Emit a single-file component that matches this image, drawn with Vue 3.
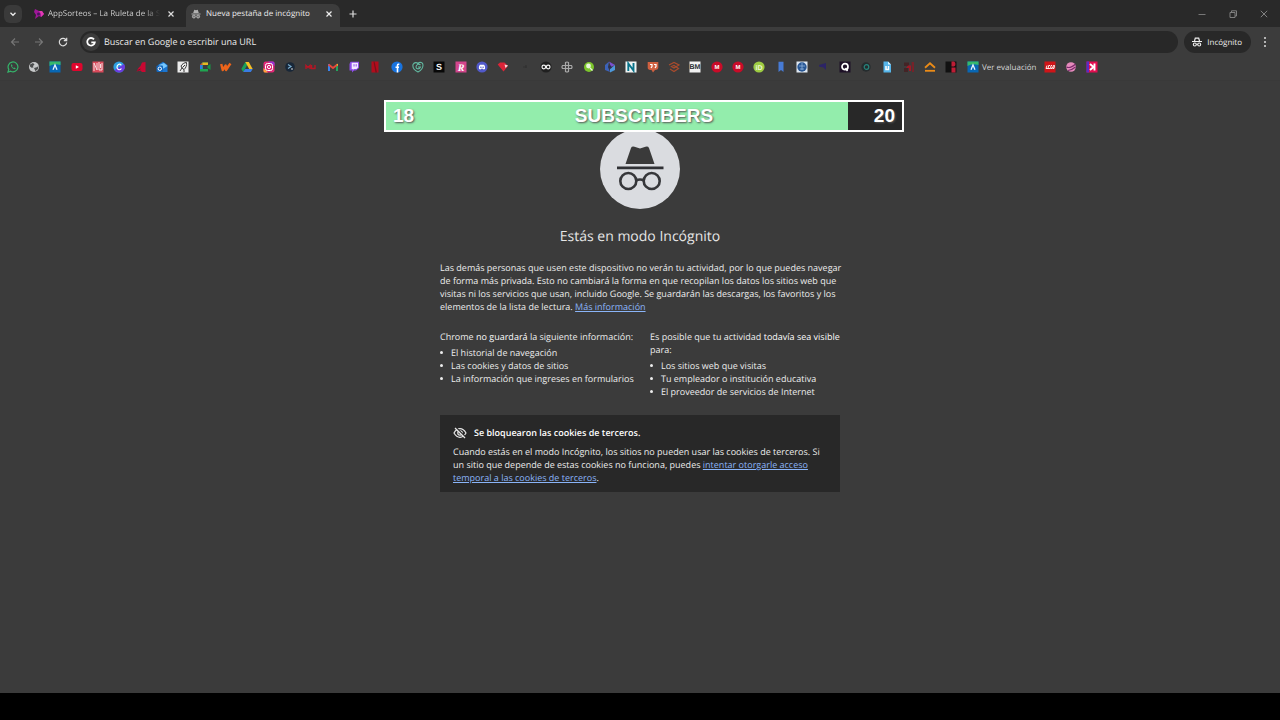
<script setup>
const letter = (t, fill, size = 9, y = 9) =>
  `<text x="6" y="${y}" text-anchor="middle" font-family="Liberation Sans, Arial, sans-serif" font-weight="bold" font-size="${size}" fill="${fill}">${t}</text>`
const square = (fill) => `<rect x="0.5" y="0.5" width="11" height="11" fill="${fill}"/>`
const disc = (fill) => `<circle cx="6" cy="6" r="5.6" fill="${fill}"/>`
const platzi =
  '<rect x="0.5" y="0.5" width="11" height="11" fill="#0867b4"/><path d="M.5 .5H11.500V4Q5 2 .5 5Z" fill="#35b86b"/><path d="M4 8.700 6 4 8 8.700" fill="none" stroke="#e6f4ff" stroke-width="1.300"/>'

const bookmarks = [
  { name: 'WhatsApp', art: '<path d="M1 11 1.800 8.400A4.900 4.900 0 1 1 3.700 10.200Z" fill="none" stroke="#35b36a" stroke-width="1.200"/><path d="M4 3.600C3.600 5.800 6 8.400 8.200 8.200L8.700 7.200 7.300 6.400 6.700 7C5.900 6.700 5.300 6.100 5 5.300L5.500 4.700 4.900 3.400Z" fill="#35b36a"/>' },
  { name: 'Web', art: '<circle cx="6" cy="6" r="5" fill="#c6c8c9"/><path d="M2 3.500 5 2 6.500 3.500 5 5 5.500 6.500 3.500 6.800 2 5.500ZM6 7 9.500 6 10.500 4 10 8 7.500 10.200Z" fill="#4b4d4e"/>' },
  { name: 'Evaluación', art: platzi },
  { name: 'YouTube', art: '<rect x=".5" y="2" width="11" height="8" rx="2" fill="#e0052d"/><path d="M4.800 4.200 8 6 4.800 7.800Z" fill="#fff"/>' },
  { name: 'NJ', art: square('#d94a5b') + '<path d="M2 10V2L5 9V2M7 1V9M7 9H10V2M8.500 3V7" fill="none" stroke="#f3d9dc" stroke-width="1"/>' },
  { name: 'Canva', art: disc('#2c9fe0') + '<path d="M6 11.600A5.600 5.600 0 0 0 11 3Q6 6 1.500 9.300 3 11.600 6 11.600Z" fill="#6a3be0"/><path d="M8.300 4.300C6.500 1.800 3.800 4 4 6.500S7 9.500 8.400 7.500" fill="none" stroke="#fff" stroke-width="1.200"/>' },
  { name: 'Adobe', art: '<path d="M10.500 1V11H7L5.500 9.500 1.500 10.500 3.500 7 5.500 5 7 1.500Z" fill="#c90832"/><path d="M2.500 9.500 5.500 8" stroke="#76102a"/>' },
  { name: 'Outlook', art: '<path d="M2 4 7 .8 11.500 4V11H2Z" fill="#1b75d0"/><path d="M3 4 8 2 11.500 5 5 9Z" fill="#76c8ff"/><rect x=".5" y="4.500" width="6.500" height="6.500" rx="1" fill="#1266bd"/><circle cx="3.800" cy="7.700" r="1.700" fill="none" stroke="#fff"/>' },
  { name: 'Pluma', art: square('#ececec') + '<path d="M3 10 5 7 4 5C5 3 7.500 1.500 9.500 1.500 10 4 9 7 7 8.500L5 7M5.500 6.500 8 4M7 8.500V11" fill="none" stroke="#262626" stroke-width=".9"/>' },
  { name: 'Meet', art: '<path d="M1 4 3.500 1.500H9V4H4V8H9V10.500H1Z" fill="#20a451"/><path d="M1 4 3.500 1.500V4Z" fill="#e34435"/><path d="M1 4H3.500V8H1Z" fill="#3179e3"/><path d="M3.500 1.500H9V4H3.500Z" fill="#e8b823"/><path d="M8.500 5 11.500 3V9L8.500 7Z" fill="#169545"/>' },
  { name: 'Wattpad', art: '<path d="M1.200 3 2.700 9 5.700 4.500 6 9 9 4.500 10.500 2.500" fill="none" stroke="#ed641a" stroke-width="2.400" stroke-linejoin="round"/>' },
  { name: 'Drive', art: '<path d="M4.300 1H7.800L4 8 2.200 11 .3 7.900Z" fill="#1aa05a"/><path d="M4.300 1H7.800L11.700 7.900H8.200Z" fill="#f5bf25"/><path d="M4.100 7.900H11.700L9.800 11H2.200Z" fill="#397ce3"/>' },
  { name: 'Instagram', art: '<rect x=".5" y=".5" width="11" height="11" rx="2" fill="#df2876"/><path d="M.5 7 5 11.500H2Q.5 11.500 .5 10Z" fill="#ffa53a"/><path d="M5 .5H10Q11.500 .5 11.500 2V5Z" fill="#9b32cf"/><rect x="2.500" y="2.500" width="7" height="7" rx="2" fill="none" stroke="#fff"/><circle cx="6" cy="6" r="1.600" fill="none" stroke="#fff"/>' },
  { name: 'Consola', art: '<circle cx="6" cy="6" r="4.800" fill="#182738"/><path d="M4 3.500 7 5.500 4 7.500" fill="none" stroke="#79aed0" stroke-width="1.200"/><path d="M7 8H9" stroke="#ddd"/>' },
  { name: 'MU', art: '<path d="M1 8V4.500L3 6.500 5 4.500V8M6.500 4V7.500H10V4" fill="none" stroke="#b51625" stroke-width="1.400"/>' },
  { name: 'Gmail', art: '<path d="M1 10V3H3V10Z" fill="#3a83ed"/><path d="M9 10V3H11V10Z" fill="#22a55c"/><path d="M1.500 3.500 6 7 10.500 3.500" fill="none" stroke="#e5483b" stroke-width="2"/><path d="M9.500 4 11 2.500V5Z" fill="#f1bb2b"/>' },
  { name: 'Twitch', art: '<path d="M2.500 .7H11V7L8 9.500H6L4 11.500V9.500H1.500V3Z" fill="#8e4de9"/><path d="M3.700 1.700H10V6.500L8.500 8H6L4.800 9V8H3.700Z" fill="#f2eaff"/><path d="M6 3.200V5.500M8.200 3.200V5.500" stroke="#8e4de9"/>' },
  { name: 'Netflix', art: '<path d="M2.500 .5H9.500V11.500H2.500Z" fill="#b10c1c"/><path d="M4.500 .5H5.500L8 11.500H6.500Z" fill="#73121c"/>' },
  { name: 'Facebook', art: disc('#1873df') + '<path d="M8.300 3.300H7.200Q6.500 3.300 6.500 4.200V11.500M4.500 6.300H8" fill="none" stroke="#fff" stroke-width="1.600"/>' },
  { name: 'Gradle', art: '<path d="M6 11C2 9 .5 6 1 3.500 2.500 .8 5 1.500 6 2.500 8 .5 11 1.500 11 4 11 7 9 9.500 6 11ZM8.500 4C7 2.500 4 3.500 4 6S7.500 8.500 8.500 6H6" fill="none" stroke="#62b9a1" stroke-width="1.100"/>' },
  { name: 'S', art: square('#080808') + letter('S', '#f5f5f5', 9, 9) },
  { name: 'R', art: square('#d2458b') + '<text x="6" y="9.500" text-anchor="middle" font-family="Liberation Serif, serif" font-style="italic" font-weight="bold" font-size="10" fill="#fff">R</text>' },
  { name: 'Discord', art: disc('#5159c9') + '<path d="M3 8C2.700 6 3.200 4.500 4 3.800H8C8.800 4.500 9.300 6 9 8L7.500 8.500 7 7.800H5L4.500 8.500Z" fill="#fff"/><circle cx="4.900" cy="6.200" r=".7" fill="#5159c9"/><circle cx="7.100" cy="6.200" r=".7" fill="#5159c9"/>' },
  { name: 'Rubí', art: '<path d="M.7 3.500 3 1.500H7.500L11 5 6.500 10.500Z" fill="#dc2438"/><path d="M7.500 3.500 11 4.500 8.500 7Z" fill="#f1dede"/>' },
  { name: 'Nota', art: '<path d="M4 6H8M7 4V7" stroke="#313131" stroke-width="1.200"/>' },
  { name: 'Codo', art: disc('#202020') + '<circle cx="3.800" cy="6" r="1.800" fill="none" stroke="#f5f5f5" stroke-width="1.200"/><circle cx="8.200" cy="6" r="1.800" fill="none" stroke="#f5f5f5" stroke-width="1.200"/>' },
  { name: 'Malla', art: '<path d="M4.500 3V1.500Q6 .5 7.500 1.500V4.500H10.500Q11.500 6 10.500 7.500H7.500V10.500Q6 11.500 4.500 10.500V7.500H1.500Q.5 6 1.500 4.500H4.500ZM4.500 4.500H7.500V7.500H4.500Z" fill="none" stroke="#a8a8a8" stroke-width="1.200"/>' },
  { name: 'Lima', art: '<circle cx="6" cy="6" r="5" fill="#7cc52c"/><circle cx="5.500" cy="5" r="2.400" fill="#e8f5db"/><path d="M7 7 9.500 9.500" fill="none" stroke="#e8f5db" stroke-width="1.200"/>' },
  { name: 'Hélice', art: '<path d="M5 .5 11 4 7 6Z" fill="#7a51cf"/><path d="M11 4V9L6 11.500 6 8Z" fill="#4d99dc"/><path d="M5 .5 1 4V9L6 11 4 6Z" fill="#3c62b8"/><circle cx="6" cy="6" r="1.600" fill="#252f58"/>' },
  { name: 'N', art: square('#f0f4f4') + '<path d="M3.300 10V2.500L8.500 9.500V2" fill="none" stroke="#08738a" stroke-width="1.900"/>' },
  { name: 'Citas', art: '<path d="M.7 1H11.300V7Q11 9 8 9L6 11.500 4.500 9Q1 9 .7 7Z" fill="#cf6040"/><path d="M3 3.500H5V5.500L4 7M7 3.500H9V5.500L8 7" fill="none" stroke="#fff" stroke-width="1.200"/>' },
  { name: 'Capas', art: '<path d="M1 4 6 1.500 11 4 6 7 3.500 5.500 6 4.500 10.500 7.500 6 10.500 2 8" fill="none" stroke="#a94b2d" stroke-width="1.200"/>' },
  { name: 'BM', art: square('#f2f2f2') + letter('BM', '#252b30', 7, 8) },
  { name: 'Mega', art: disc('#c90b28') + letter('M', '#fff', 6, 8) },
  { name: 'Mega 2', art: disc('#c90b28') + letter('M', '#fff', 6, 8) },
  { name: 'iD', art: disc('#9dcc42') + letter('iD', '#eff8d8', 7, 9) },
  { name: 'Marcador', art: '<path d="M3.500 .7H8.500V11L6 9 3.500 11Z" fill="#477bd5"/>' },
  { name: 'Escudo', art: square('#dfe8f2') + '<circle cx="6" cy="6" r="4.700" fill="#285795"/><path d="M3 5H9M6 2V9M4 8H8" stroke="#91b4dd" stroke-width=".8"/>' },
  { name: 'Bandera', art: '<path d="M2 4 9 2V9L6.500 6.500 2 5.500Z" fill="#2c2466"/>' },
  { name: 'Q', art: square('#1d1026') + '<circle cx="6" cy="5.700" r="3" fill="none" stroke="#fff" stroke-width="1.700"/><path d="M6.500 7 8.500 10" stroke="#fff" stroke-width="1.500"/>' },
  { name: 'Órbita', art: '<circle cx="6" cy="6" r="4.700" fill="#252c2e"/><circle cx="6.500" cy="6" r="2.300" fill="none" stroke="#26867d" stroke-width="1.200"/>' },
  { name: 'Udocz', art: '<path d="M2.500 .5H7L10 3.500V11.500H2.500Z" fill="#55b5ea"/><path d="M7 .5 10 3.500H7Z" fill="#d9f4ff"/><path d="M5 5V8.500H7.500V5" fill="none" stroke="#fff" stroke-width="1.500"/>' },
  { name: 'Ladrillo', art: '<path d="M1 1.500H6V5H1ZM1 7H5V11H1Z" fill="#432426"/><path d="M5 4.500H8V10H6V7H3Z" fill="#9f1826"/><path d="M8.500 1H11V11H9Z" fill="#74232a"/>' },
  { name: 'Techo', art: '<path d="M1 6.700 6 2.300 11 6.700" fill="none" stroke="#eb8b17" stroke-width="1.800"/><path d="M1 9.800H11" stroke="#eb8b17" stroke-width="1.800"/>' },
  { name: 'Bloques', art: square('#111') + '<path d="M6.500 .5H9Q10.500 1 10.500 3T9 5.500H6.500ZM6.500 6.500H10.500V11.500H6.500Z" fill="#bd1d35"/>' },
]

const moreBookmarks = [
  { name: 'Lego', art: square('#cf1418') + '<path d="M2 7.500 3 4.500M2 7.500H4M6 4.500H4.700L4 7.500H6M8 4.500H7L6.500 7.500H8L8.300 6M9.300 4.500H10.500L10 7.500H8.800Z" fill="none" stroke="#fff" stroke-width=".9"/>' },
  { name: 'Esfera', art: '<circle cx="6" cy="6" r="4.800" fill="#e58abc"/><path d="M1.500 6Q5 8 10.500 3M3 9.500Q7 9 10.500 6" fill="none" stroke="#7b2a6c" stroke-width="1.100"/>' },
  { name: 'Kick', art: square('#e30d50') + '<path d="M.5 .5H3V11.500H.5Z" fill="#572cc6"/><path d="M8.500 2.500V9.500M4 3 7.500 6 4 9" fill="none" stroke="#fff" stroke-width="1.900"/>' },
]

const goal = { current: 18, target: 20, label: 'SUBSCRIBERS' }
</script>

<template>
  <div class="screen">
    <header>
      <div class="tabs">
        <button class="tab-search" aria-label="Buscar pestañas">
          <svg viewBox="0 0 12 12"><path d="M3.500 4.800 6 7.300 8.500 4.800" fill="none" stroke="#eee" stroke-width="1.300" /></svg>
        </button>
        <div class="tab">
          <svg class="favicon" viewBox="0 0 12 12"><path d="M2 1 6 3 9 3 11 6 8 9 6 8 2 11 3 7 1 4Z" fill="#a01799" /><path d="M6 3 9 3 11 6 8 9 8 6Z" fill="#e13bb3" /><circle cx="5.500" cy="6" r="1.500" fill="#4b1460" /></svg>
          <span class="tab-title faded">AppSorteos – La Ruleta de la Su</span>
          <button class="icon-button" aria-label="Cerrar AppSorteos"><svg viewBox="0 0 12 12"><path d="M3.500 3.500 8.500 8.500M8.500 3.500 3.500 8.500" stroke="#ddd" stroke-width="1.200" /></svg></button>
        </div>
        <div class="tab active">
          <svg class="favicon" viewBox="0 0 12 12"><path d="M3.200 5 4.300 1.700 6 2.200 7.700 1.700 8.800 5Z" fill="#b1b1b1" /><path d="M1.500 6H10.500" stroke="#b1b1b1" /><circle cx="3.900" cy="8.500" r="1.500" fill="#777" stroke="#b1b1b1" /><circle cx="8.100" cy="8.500" r="1.500" fill="#777" stroke="#b1b1b1" /></svg>
          <span class="tab-title">Nueva pestaña de incógnito</span>
          <button class="icon-button" aria-label="Cerrar pestaña"><svg viewBox="0 0 12 12"><path d="M3.500 3.500 8.500 8.500M8.500 3.500 3.500 8.500" stroke="#eee" stroke-width="1.200" /></svg></button>
        </div>
        <button class="icon-button new-tab" aria-label="Nueva pestaña"><svg viewBox="0 0 12 12"><path d="M6 2.500V9.500M2.500 6H9.500" stroke="#ddd" stroke-width="1.200" /></svg></button>
        <div class="window-controls">
          <button class="icon-button" aria-label="Minimizar"><svg viewBox="0 0 12 12"><path d="M2.500 6.500H9.500" stroke="#777" /></svg></button>
          <button class="icon-button" aria-label="Restaurar"><svg viewBox="0 0 12 12"><path d="M3 4.500H8V9.500H3ZM4.500 4.500V2.800H9.500V8H8" fill="none" stroke="#888" stroke-width=".9" /></svg></button>
          <button class="icon-button" aria-label="Cerrar"><svg viewBox="0 0 12 12"><path d="M2.800 2.800 9.200 9.200M9.200 2.800 2.800 9.200" stroke="#8b8b8b" stroke-width=".9" /></svg></button>
        </div>
      </div>

      <div class="toolbar">
        <button class="icon-button" aria-label="Atrás"><svg viewBox="0 0 12 12"><path d="M10 6H2.500M6 2.500 2.500 6 6 9.500" fill="none" stroke="#777" stroke-width="1.100" /></svg></button>
        <button class="icon-button" aria-label="Adelante"><svg viewBox="0 0 12 12"><path d="M2 6H9.500M6 2.500 9.500 6 6 9.500" fill="none" stroke="#777" stroke-width="1.100" /></svg></button>
        <button class="icon-button" aria-label="Volver a cargar"><svg viewBox="0 0 12 12"><path d="M9.200 4.200A3.700 3.700 0 1 0 9.700 6.500M9.700 1.800V4.700H6.800" fill="none" stroke="#ddd" stroke-width="1.200" /></svg></button>
        <div class="omnibox">
          <span class="google"><svg viewBox="0 0 12 12"><path d="M9 3.400A3.800 3.800 0 1 0 9.800 6.300H6.300" fill="none" stroke="#fff" stroke-width="1.800" /></svg></span>
          <input type="text" aria-label="Barra de direcciones" placeholder="Buscar en Google o escribir una URL" />
        </div>
        <button class="incognito">
          <svg viewBox="0 0 12 12"><path d="M3.500 5 4.300 2.200H7.700L8.500 5M1 5.500H11" fill="none" stroke="#eee" stroke-width="1.200" /><circle cx="3.800" cy="8.500" r="1.500" fill="none" stroke="#eee" stroke-width="1.100" /><circle cx="8.200" cy="8.500" r="1.500" fill="none" stroke="#eee" stroke-width="1.100" /><path d="M5.300 8.300H6.700" stroke="#eee" /></svg>
          <span>Incógnito</span>
        </button>
        <button class="icon-button menu" aria-label="Menú"><svg viewBox="0 0 12 12"><g fill="#ddd"><circle cx="6" cy="2" r="1" /><circle cx="6" cy="6" r="1" /><circle cx="6" cy="10" r="1" /></g></svg></button>
      </div>

      <nav class="bookmarks" aria-label="Favoritos">
        <div class="bookmark-grid">
          <a v-for="b in bookmarks" :key="b.name" href="#" :aria-label="b.name"><svg viewBox="0 0 12 12" v-html="b.art" /></a>
        </div>
        <a class="named" href="#"><svg viewBox="0 0 12 12" v-html="platzi" /><span>Ver evaluación</span></a>
        <a v-for="b in moreBookmarks" :key="b.name" class="extra" href="#" :aria-label="b.name"><svg viewBox="0 0 12 12" v-html="b.art" /></a>
      </nav>
    </header>

    <main>
      <article>
        <svg class="hero" viewBox="0 0 80 80">
          <circle cx="40" cy="40" r="40" fill="#dadce0" />
          <path d="M25.500 35 31 19Q32 17 34.500 17.800L40 19.500 45.500 17.800Q48 17 49 19L54.500 35Z" fill="#3a3a3a" />
          <path d="M17 38.800H63.500" stroke="#303135" stroke-width="2.800" />
          <g fill="none" stroke="#36373a" stroke-width="2.600"><circle cx="28.300" cy="52" r="8" /><circle cx="51.700" cy="52" r="8" /><path d="M36 51.500Q40 49.500 44 51.500" /></g>
        </svg>
        <h1>Estás en modo Incógnito</h1>
        <p class="intro">
          Las demás personas que usen este dispositivo no verán tu actividad, por lo que puedes navegar<br />
          de forma más privada. Esto no cambiará la forma en que recopilan los datos los sitios web que<br />
          visitas ni los servicios que usan, incluido Google. Se guardarán las descargas, los favoritos y los<br />
          elementos de la lista de lectura. <a href="#">Más información</a>
        </p>
        <div class="columns">
          <section>
            <p>Chrome <em>no guardará</em> la siguiente información:</p>
            <ul>
              <li>El historial de navegación</li>
              <li>Las cookies y datos de sitios</li>
              <li>La información que ingreses en formularios</li>
            </ul>
          </section>
          <section>
            <p>Es posible que tu actividad <em>todavía sea visible</em><br />para:</p>
            <ul>
              <li>Los sitios web que visitas</li>
              <li>Tu empleador o institución educativa</li>
              <li>El proveedor de servicios de Internet</li>
            </ul>
          </section>
        </div>
        <section class="cookies">
          <h2>
            <svg viewBox="0 0 14 14"><path d="M1 7Q3.500 2.700 7 2.700T13 7Q10.500 11.300 7 11.300T1 7Z" fill="none" stroke="#e8e8e8" stroke-width="1.200" /><circle cx="7" cy="7" r="2.200" fill="none" stroke="#e8e8e8" stroke-width="1.200" /><path d="M3 1.500 13 11.500" stroke="#282828" stroke-width="1.500" /><path d="M2 2 12 12" stroke="#e8e8e8" stroke-width="1.200" /></svg>
            <span>Se bloquearon las cookies de terceros.</span>
          </h2>
          <p>
            Cuando estás en el modo Incógnito, los sitios no pueden usar las cookies de terceros. Si
            un sitio que depende de estas cookies no funciona, puedes <a href="#">intentar otorgarle acceso
            temporal a las cookies de terceros</a>.
          </p>
        </section>
      </article>
    </main>
    <footer></footer>

    <div class="goal">
      <div class="goal-fill" :style="{ width: `calc(${goal.current / goal.target * 100}% - 2px)` }"></div>
      <span>{{ goal.current }}</span>
      <strong>{{ goal.label }}</strong>
      <span>{{ goal.target }}</span>
    </div>
  </div>
</template>

<style>
body { background: #000; }
</style>

<style scoped>
* { box-sizing: border-box; }
.screen {
  position: relative;
  display: flex;
  flex-direction: column;
  min-height: 100vh;
  background: #3b3b3b;
  color: #ececec;
  font: 9px/13px "Open Sans", "Noto Sans", sans-serif;
  text-rendering: geometricPrecision;
}
button { border: 0; padding: 0; background: none; color: inherit; font: inherit; text-rendering: inherit; }
svg { display: block; width: 12px; height: 12px; flex: none; }
.icon-button { display: grid; place-items: center; width: 16px; height: 16px; flex: none; }
.tabs { display: flex; align-items: center; height: 27px; padding: 0 8px 0 4px; background: #292929; font-size: 8px; }
.tab-search { display: grid; place-items: center; width: 18px; height: 18px; border-radius: 6px; background: #3a3a3a; }
.tab { display: flex; align-items: center; width: 154px; height: 23px; margin-left: 10px; padding: 0 7px 0 1px; gap: 3px; }
.tab.active { align-self: flex-end; width: 154px; margin-left: 0; padding: 0 3px 4px 4px; gap: 4px; border-radius: 7px 7px 0 0; background: #3c3c3c; }
.tab-title { flex: 1; min-width: 0; white-space: nowrap; }
.tab-title.faded { color: #cacaca; mask-image: linear-gradient(to right, #000 86%, transparent); }
.new-tab { margin-left: 5px; }
.window-controls { display: flex; gap: 15px; margin-left: auto; }
.toolbar { display: flex; align-items: center; height: 30px; padding: 0 7px; background: #3c3c3c; }
.toolbar > .icon-button + .icon-button { margin-left: 8px; }
.omnibox { display: flex; flex: 1; align-items: center; gap: 4px; height: 22px; margin: 0 6px 0 9px; padding-left: 2px; border-radius: 11px; background: #282828; }
.google { display: grid; place-items: center; width: 18px; height: 18px; border-radius: 50%; background: #3c3c3c; }
.omnibox input { flex: 1; min-width: 0; height: 18px; border: 0; padding: 0 0 1px; outline: 0; background: none; color: #ececec; font: inherit; text-rendering: inherit; }
.omnibox input::placeholder { color: #ececec; opacity: 1; }
.incognito { display: flex; align-items: center; gap: 4px; height: 22px; padding: 0 9px 0 7px; border-radius: 11px; background: #282828; font-size: 8px; }
.menu { margin-left: 6px; }
.bookmarks { display: flex; align-items: center; height: 24px; padding-bottom: 3px; border-bottom: 1px solid #393939; background: #3c3c3c; font-size: 8px; }
.bookmark-grid { display: grid; grid-template-columns: repeat(45, 1fr); flex: 0 0 75%; justify-items: center; margin-left: 2px; }
.bookmarks a { color: #d6d6d6; text-decoration: none; }
.named { display: flex; gap: 3px; align-items: center; margin: 0 8px 0 5px; }
.extra { margin-right: 9px; }
main { flex: 1; padding: 48px 16px 24px; }
article { display: flex; flex-direction: column; max-width: 400px; margin: 0 auto; }
.hero { width: 80px; height: 80px; margin: 0 auto; }
h1 { margin: 18px 0 14px; color: #e6e6e6; font-size: 14px; font-weight: 400; line-height: 20px; text-align: center; }
p { margin: 0; }
article a { color: #8ab4f8; }
em { color: #fafafa; font-style: normal; }
.intro, .columns { white-space: nowrap; }
.columns { display: grid; grid-template-columns: 1fr 1fr; column-gap: 20px; margin-top: 17px; }
.columns section { min-width: 0; }
ul { margin: 3px 0 0; padding: 0; list-style: none; }
li { display: flex; align-items: center; gap: 8px; }
li::before { content: ""; flex: none; width: 3px; height: 3px; border-radius: 50%; background: #ececec; }
.cookies { margin-top: 17px; padding: 11px 13px 8px; background: #282828; }
h2 { display: flex; align-items: center; gap: 7px; margin: 0 0 5px; color: #fff; font-size: 9px; font-weight: 600; line-height: 14px; }
h2 svg { width: 14px; height: 14px; }
footer { height: 27px; background: #000; }
.goal {
  position: absolute;
  top: 100px;
  left: 30%;
  display: flex;
  align-items: center;
  justify-content: space-between;
  width: 520px;
  height: 32px;
  padding: 0 7px;
  border: 2px solid #fff;
  background: #282828;
  color: #fff;
  font: bold 19px/28px "Liberation Sans", Arial, sans-serif;
  text-rendering: auto;
  text-shadow: 1px 1px 2px #555;
}
.goal-fill { position: absolute; inset: 0 auto 0 0; background: #93edac; }
.goal span, .goal strong { position: relative; }
</style>
